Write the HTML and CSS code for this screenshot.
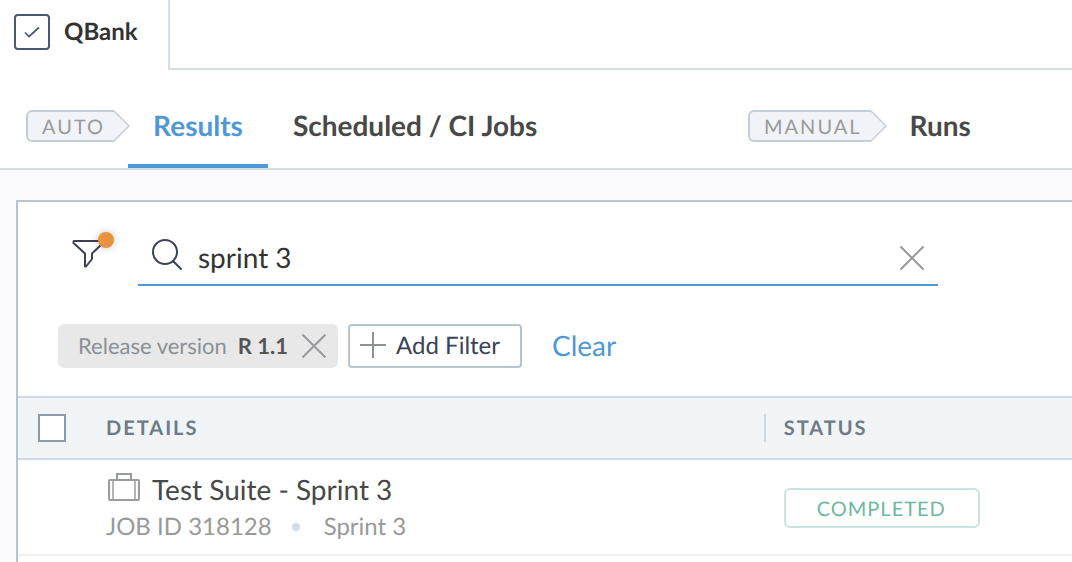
FILE: index.html
```html
<!DOCTYPE html>
<html lang="en">
<head>
<meta charset="utf-8">
<meta name="viewport" content="width=device-width, initial-scale=1">
<title>QBank</title>
<link rel="stylesheet" href="styles.css">
</head>
<body>
<header class="topbar">
  <a class="tab" href="#">
    <svg class="tab-icon" width="36" height="36" viewBox="0 0 36 36" fill="none" stroke="#4a5878" stroke-width="2">
      <rect x="1" y="1" width="34" height="34" rx="3"/>
      <path d="M11 18.500l4 4L25 13.500" stroke-width="1.700"/>
    </svg>
    <span class="tab-label">QBank</span>
  </a>
  <div class="topbar-rest"></div>
</header>
<nav class="nav">
  <div class="nav-group">
    <span class="tag"><span class="tag-label">AUTO</span><svg class="tag-tip" width="16" height="32" viewBox="0 0 16 32"><path d="M0 1L15 16L0 31" fill="#f0f3f8" stroke="#c4ced6" stroke-width="1.500"/></svg></span>
    <a class="nav-link nav-link-active" href="#">Results</a>
    <a class="nav-link" href="#">Scheduled / CI Jobs</a>
  </div>
  <div class="nav-group">
    <span class="tag"><span class="tag-label">MANUAL</span><svg class="tag-tip" width="16" height="32" viewBox="0 0 16 32"><path d="M0 1L15 16L0 31" fill="#f0f3f8" stroke="#c4ced6" stroke-width="1.500"/></svg></span>
    <a class="nav-link" href="#">Runs</a>
  </div>
</nav>
<main class="main">
  <section class="panel">
    <div class="search-row">
      <button class="icon-button filter-button" aria-label="Filters">
        <svg width="42" height="38" viewBox="0 0 42 38" fill="none" stroke="#3b4258" stroke-width="2" stroke-linejoin="round">
          <path d="M2 9H31.500V10.500L20 21.500V27L14 34.500H13V21.500L1.500 11V9.500Z"/>
        </svg>
        <span class="dot"></span>
      </button>
      <div class="search">
        <svg width="32" height="32" viewBox="0 0 32 32" fill="none" stroke="#3b4258" stroke-width="2" stroke-linecap="round">
          <circle cx="13" cy="13" r="12"/>
          <path d="M21.500 22.500L29 30"/>
        </svg>
        <input class="search-input" type="text" value="sprint 3" aria-label="Search">
        <button class="icon-button" aria-label="Clear search">
          <svg width="24" height="24" viewBox="0 0 24 24" stroke="#96999d" stroke-width="2"><path d="M.5 .5L23.500 23.500M23.500 .5L.5 23.500"/></svg>
        </button>
      </div>
    </div>
    <div class="filters">
      <span class="chip">
        <span class="chip-name">Release version</span>
        <strong class="chip-value">R 1.1</strong>
        <button class="icon-button" aria-label="Remove filter">
          <svg width="24" height="24" viewBox="0 0 24 24" stroke="#96999d" stroke-width="2"><path d="M.5 .5L23.500 23.500M23.500 .5L.5 23.500"/></svg>
        </button>
      </span>
      <button class="add-filter">
        <svg width="26" height="26" viewBox="0 0 26 26" stroke="#8e9296" stroke-width="2"><path d="M13 0V26M0 13H26"/></svg>
        <span>Add Filter</span>
      </button>
      <button class="clear">Clear</button>
    </div>
    <table class="jobs">
      <colgroup><col class="col-check"><col class="col-details"><col></colgroup>
      <thead>
        <tr>
          <th class="cell-check"><input class="checkbox" type="checkbox" aria-label="Select all"></th>
          <th><div class="head">DETAILS</div></th>
          <th><div class="head head-divided">STATUS</div></th>
        </tr>
      </thead>
      <tbody>
        <tr>
          <td></td>
          <td class="cell-details">
            <div class="job-title">
              <svg width="32" height="28" viewBox="0 0 32 28" fill="none" stroke="#999c9f" stroke-width="2">
                <rect x="1" y="7" width="30" height="20" rx="1"/>
                <path d="M9 7V1H23V7" />
                <path d="M5 7V27M27 7V27" stroke-width="1.500"/>
              </svg>
              <span>Test Suite - Sprint 3</span>
            </div>
            <div class="job-meta"><span>JOB ID 318128</span><span class="bullet"></span><span>Sprint 3</span></div>
          </td>
          <td class="cell-status"><span class="status">COMPLETED</span></td>
        </tr>
      </tbody>
    </table>
  </section>
</main>
</body>
</html>
```
FILE: styles.css
```css
* {
  box-sizing: border-box;
}

body {
  margin: 0;
  min-height: 100vh;
  display: flex;
  flex-direction: column;
  overflow-x: hidden;
  background: #fff;
  color: #484848;
  font-family: Lato, "Open Sans", sans-serif;
  text-rendering: geometricPrecision;
}

svg {
  display: block;
  flex: none;
}

a {
  color: inherit;
  text-decoration: none;
}

button,
input {
  margin: 0;
  font-family: inherit;
  text-rendering: inherit;
}

.icon-button {
  display: flex;
  padding: 0;
  border: 0;
  background: none;
}

.topbar {
  display: flex;
  height: 70px;
}

.tab {
  display: flex;
  align-items: center;
  gap: 14px;
  padding: 0 30px 6px 14px;
  border-right: 2px solid #d3dde4;
  color: #333;
  font-size: 24px;
  font-weight: 700;
}

.tab-label {
  padding-bottom: 2px;
}

.topbar-rest {
  flex: 1;
  border-bottom: 2px solid #d3dde4;
}

.nav {
  display: grid;
  grid-template-columns: 722fr 324fr;
  height: 100px;
  padding-left: 26px;
  border-bottom: 2px solid #d3dde4;
}

.nav-group {
  display: flex;
  white-space: nowrap;
}

.tag {
  display: flex;
  height: 32px;
  margin-top: 40px;
  margin-right: -2px;
}

.tag-label {
  padding: 0 9px 0 14px;
  border: 2px solid #c4ced6;
  border-right: 0;
  border-radius: 6px 0 0 6px;
  background: #f0f3f8;
  color: #999;
  font-size: 20px;
  line-height: 30px;
  letter-spacing: 2px;
}

.nav-link {
  height: 98px;
  padding: 0 25px;
  border-bottom: 4px solid transparent;
  font-size: 28px;
  font-weight: 700;
  line-height: 110px;
}

.nav-link-active {
  border-color: #4f98d8;
  color: #4f98d8;
}

.main {
  flex: 1;
  display: flex;
  padding: 30px 0 0 16px;
  background: #fafafc;
}

.panel {
  flex: 1;
  min-width: 0;
  border-top: 2px solid #b5c5d0;
  border-left: 2px solid #b5c5d0;
  background: #fff;
}

.search-row {
  display: flex;
  gap: 24px;
  padding: 30px 20px 0 54px;
}

.filter-button {
  position: relative;
  align-self: flex-start;
}

.dot {
  position: absolute;
  top: 0;
  right: 0;
  width: 16px;
  height: 16px;
  border-radius: 50%;
  background: #e8923f;
  box-shadow: 0 0 8px rgba(0, 0, 0, 0.25);
}

.search {
  flex: 1;
  display: flex;
  align-items: center;
  max-width: 800px;
  height: 54px;
  padding: 0 14px;
  border-bottom: 2px solid #4f98d8;
}

.search svg {
  margin-bottom: 6px;
}

.search .icon-button svg {
  margin-bottom: 0;
}

.search-input {
  flex: 1;
  min-width: 0;
  height: 52px;
  padding: 0 14px 2px;
  border: 0;
  outline: 0;
  background: none;
  color: #333;
  font-size: 28px;
}

.filters {
  display: flex;
  gap: 10px;
  padding: 38px 20px 28px 40px;
}

.chip {
  display: flex;
  align-items: center;
  gap: 11px;
  height: 44px;
  padding: 0 12px 0 20px;
  border-radius: 6px;
  background: #e8e8e8;
  color: #8a9197;
  font-size: 22px;
  line-height: 28px;
  white-space: nowrap;
}

.chip-value {
  margin-right: 3px;
  color: #555;
}

.add-filter {
  display: flex;
  align-items: center;
  gap: 10px;
  height: 44px;
  padding: 0 20px 0 10px;
  border: 2px solid #b5c5d0;
  border-radius: 4px;
  background: #fff;
  color: #3b4258;
  font-size: 24px;
  line-height: 28px;
}

.add-filter svg {
  margin-bottom: 2px;
}

.clear {
  padding: 0 20px 2px;
  border: 0;
  background: none;
  color: #4f98d8;
  font-size: 28px;
}

.jobs {
  width: 100%;
  table-layout: fixed;
  border-collapse: separate;
  border-spacing: 0;
}

.col-check {
  width: 88px;
}

.col-details {
  width: 62.4%;
}

.jobs th,
.jobs td {
  padding: 0;
  text-align: left;
}

.jobs th {
  height: 64px;
  border-top: 2px solid #ccd9e2;
  border-bottom: 2px solid #ccd9e2;
  background: #f0f4f7;
}

.jobs th.cell-check {
  padding-left: 20px;
}

.checkbox {
  display: block;
  width: 28px;
  height: 28px;
  appearance: none;
  border: 2px solid #8c9ab0;
  background: #fff;
}

.head {
  color: #6e7b84;
  font-size: 20px;
  font-weight: 700;
  line-height: 28px;
  letter-spacing: 2px;
}

.head-divided {
  padding-left: 18px;
  border-left: 2px solid #ccd9e2;
}

.jobs td {
  height: 96px;
  border-bottom: 2px solid #f0f0f0;
}

.jobs td.cell-details {
  padding-top: 4px;
}

.job-title {
  display: flex;
  align-items: center;
  gap: 12px;
  padding-left: 2px;
  font-size: 28px;
  line-height: 36px;
}

.job-title svg {
  margin-bottom: 4px;
}

.job-meta {
  display: flex;
  align-items: center;
  color: #999;
  font-size: 24px;
  line-height: 40px;
}

.bullet {
  width: 8px;
  height: 8px;
  margin: 0 24px 0 20px;
  border-radius: 50%;
  background: #d3dde6;
}

.jobs td.cell-status {
  padding: 2px 0 0 20px;
}

.status {
  display: inline-block;
  height: 40px;
  padding: 0 32px 0 31px;
  border: 2px solid #c9e3df;
  border-radius: 6px;
  color: #6cb8a0;
  font-size: 20px;
  line-height: 38px;
  letter-spacing: 1px;
}
```
